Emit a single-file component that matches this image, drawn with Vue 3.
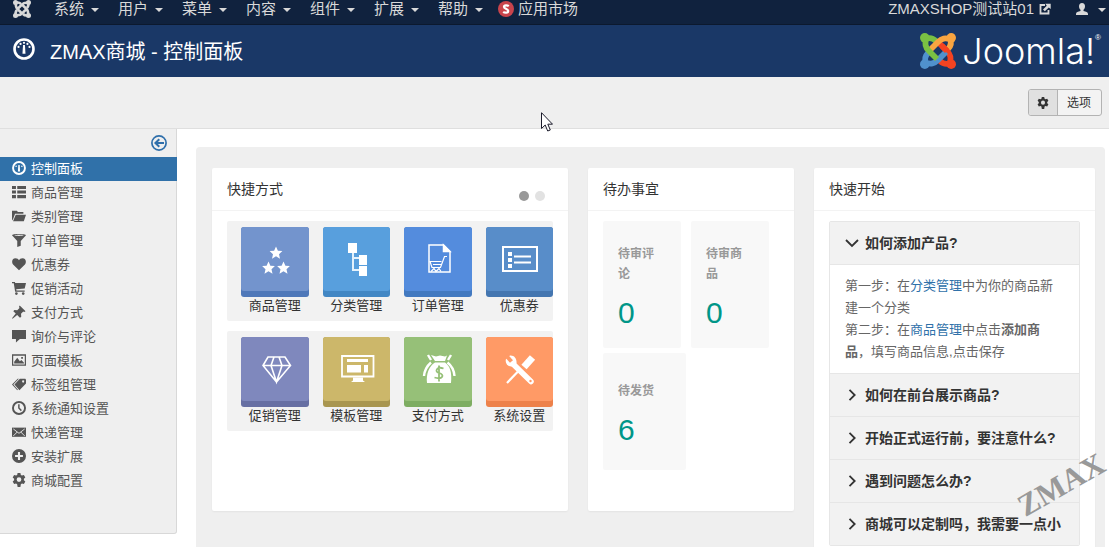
<script setup>
import { ref } from 'vue'

const menus = ['系统', '用户', '菜单', '内容', '组件', '扩展', '帮助']

const sidebar = [
  { label: '控制面板', icon: 'dash' },
  { label: '商品管理', icon: 'list' },
  { label: '类别管理', icon: 'folder' },
  { label: '订单管理', icon: 'filter' },
  { label: '优惠券', icon: 'heart' },
  { label: '促销活动', icon: 'cart' },
  { label: '支付方式', icon: 'pin' },
  { label: '询价与评论', icon: 'comment' },
  { label: '页面模板', icon: 'image' },
  { label: '标签组管理', icon: 'tag' },
  { label: '系统通知设置', icon: 'clock' },
  { label: '快递管理', icon: 'mail' },
  { label: '安装扩展', icon: 'plus' },
  { label: '商城配置', icon: 'gear' },
]

const shortcutRows = [
  [
    { label: '商品管理', icon: 'stars' },
    { label: '分类管理', icon: 'tree' },
    { label: '订单管理', icon: 'order' },
    { label: '优惠券', icon: 'coupon' },
  ],
  [
    { label: '促销管理', icon: 'diamond' },
    { label: '模板管理', icon: 'screen' },
    { label: '支付方式', icon: 'money' },
    { label: '系统设置', icon: 'tools' },
  ],
]

const todos = [
  { label: '待审评论', count: 0 },
  { label: '待审商品', count: 0 },
  { label: '待发货', count: 6 },
]

const questions = [
  '如何添加产品?',
  '如何在前台展示商品?',
  '开始正式运行前，要注意什么?',
  '遇到问题怎么办?',
  '商城可以定制吗，我需要一点小',
]
const open = ref(0)
const slide = ref(0)
const star = 'M0-6.5 1.9-2.2 6.4-1.9 3 1.2 4 5.7 0 3.3-4 5.7-3 1.2-6.4-1.9-1.9-2.2z'
const gear = 'M6.4 0h3.2l.5 2.2 1.3.7 2.2-.7 1.6 2.8-1.6 1.6v1.6l1.6 1.6-1.6 2.9-2.2-.7-1.3.8L9.600 16H6.400l-.5-3.200-1.300-.8-2.200.7L.8 9.800l1.600-1.600V6.600L.8 5l1.600-2.800 2.200.7 1.300-.7zM8 4.800a2.700 2.700 0 1 0 0 5.400 2.700 2.700 0 0 0 0-5.400z'
</script>

<template>
  <div class="page">
    <nav class="topbar">
      <a class="brand" href="#" aria-label="Joomla">
        <svg viewBox="0 0 36 36" width="18" height="18">
          <g fill="none" stroke="#d9d9d9" stroke-width="5">
            <path d="M6 6C5 11 5 14 9 18L17 26M30 6C25 5 22 5 18 9L10 17M30 30C31 25 31 22 27 18L19 10M6 30C11 31 14 31 18 27L26 19" />
            <path d="M5 6C10 4 13 5 16 8M30 5C32 10 31 13 28 16M31 30C26 32 23 31 20 28M6 31C4 26 5 23 8 20" />
          </g>
          <g fill="#d9d9d9"><circle cx="5" cy="5" r="5" /><circle cx="31" cy="5" r="5" /><circle cx="5" cy="31" r="5" /><circle cx="31" cy="31" r="5" /></g>
        </svg>
      </a>
      <ul class="menus">
        <li v-for="m in menus" :key="m"><a href="#">{{ m }}<i class="caret"></i></a></li>
      </ul>
      <a class="market" href="#">
        <svg viewBox="0 0 16 16" width="16" height="16">
          <circle cx="8" cy="8" r="8" fill="#c9444c" />
          <path d="M10.800 5.200C9.500 4.200 6 3.800 6 5.900 6 8 10.200 7.500 10.200 10 10.200 12.200 6.600 12 5.200 10.800" fill="none" stroke="#fff" stroke-width="2.200" />
        </svg>
        应用市场
      </a>
      <a class="site" href="#">
        ZMAXSHOP测试站01
        <svg viewBox="0 0 12 12" width="12" height="12">
          <path d="M6 2H1.500v8.500H9.500V7" fill="none" stroke="#d9d9d9" stroke-width="1.800" />
          <path d="M4 6.500 7.800 2.800 6.300.8H11.700V6L9.800 4.600 5.800 8.300z" fill="#d9d9d9" />
        </svg>
      </a>
      <a class="user" href="#" aria-label="用户">
        <svg viewBox="0 0 12 12" width="12" height="12">
          <path d="M6 0c2 0 3 1.300 3 3.200C9 5 8.200 6 7.500 6.800v1.200c2.500.5 4.500 1.200 4.500 3v1H0v-1c0-1.800 2-2.500 4.500-3V6.800C3.800 6 3 5 3 3.200 3 1.300 4 0 6 0z" fill="#d9d9d9" />
        </svg>
        <i class="caret"></i>
      </a>
    </nav>

    <header class="header">
      <svg class="head-icon" viewBox="0 0 16 16" width="22" height="22">
        <circle cx="8" cy="8" r="6.900" fill="none" stroke="#fff" stroke-width="1.900" />
        <path d="M7.300 5h1.400l.4 6.500H6.900z" fill="#fff" />
        <g fill="#fff"><circle cx="4" cy="6.500" r=".8" /><circle cx="5.500" cy="4.300" r=".8" /><circle cx="8" cy="3.500" r=".8" /><circle cx="10.500" cy="4.300" r=".8" /><circle cx="12" cy="6.500" r=".8" /></g>
      </svg>
      <h1>ZMAX商城 - 控制面板</h1>
      <div class="logo">
        <svg viewBox="0 0 36 36" width="36" height="36">
          <g fill="none" stroke-width="5.800">
            <path d="M5 6C10 4 13 5 16 8" stroke="#7ac143" />
            <path d="M30 5C32 10 31 13 28 16" stroke="#f9a541" />
            <path d="M31 30C26 32 23 31 20 28" stroke="#f44321" />
            <path d="M6 31C4 26 5 23 8 20" stroke="#5091cd" />
            <path d="M30 30C31 25 31 22 27 18L19 10" stroke="#f44321" />
            <path d="M6 30C11 31 14 31 18 27L26 19" stroke="#5091cd" />
            <path d="M30 6C25 5 22 5 18 9L10 17" stroke="#f9a541" />
            <path d="M6 6C5 11 5 14 9 18L17 26" stroke="#7ac143" />
            <path d="M27 18 22 13" stroke="#f44321" />
          </g>
          <circle cx="4.800" cy="4.800" r="4.800" fill="#7ac143" />
          <circle cx="31.200" cy="4.800" r="4.800" fill="#f9a541" />
          <circle cx="31.200" cy="31.200" r="4.800" fill="#f44321" />
          <circle cx="4.800" cy="31.200" r="4.800" fill="#5091cd" />
        </svg>
        <span class="wordmark">Joomla!</span><sup>®</sup>
      </div>
    </header>

    <div class="subhead">
      <button class="options" type="button">
        <span class="options-icon"><svg viewBox="0 0 16 16" width="12" height="12"><path :d="gear" fill="#333" fill-rule="evenodd" /></svg></span>
        <span class="options-text">选项</span>
      </button>
    </div>

    <div class="body">
      <aside class="sidebar">
        <button class="toggle" type="button" aria-label="收起">
          <svg viewBox="0 0 16 16" width="16" height="16" fill="none" stroke="#2f6fab">
            <circle cx="8" cy="8" r="7.100" stroke-width="1.700" />
            <path d="M13 8H5M8.300 4.200 4.400 8l3.900 3.800" stroke-width="2" />
          </svg>
        </button>
        <ul>
          <li v-for="(s, i) in sidebar" :key="s.label">
            <a href="#" :class="{ active: i === 0 }">
              <svg viewBox="0 0 16 16" width="14" height="14" fill="currentColor">
                <template v-if="s.icon === 'dash'">
                  <circle cx="8" cy="8" r="6.800" fill="none" stroke="currentColor" stroke-width="2.200" />
                  <path d="M7.200 4.500h1.600l.4 7.500H6.800z" /><circle cx="4.700" cy="6" r=".9" /><circle cx="11.300" cy="6" r=".9" />
                </template>
                <path v-else-if="s.icon === 'list'" d="M0 1h4.500v3.600H0zM6 1h10v3.600H6zM0 6.200h4.500v3.600H0zM6 6.200h10v3.600H6zM0 11.400h4.500V15H0zM6 11.400h10V15H6z" />
                <path v-else-if="s.icon === 'folder'" d="M0 2h5.500l1.300 1.500H13V5.500H3.500L1.300 11.500 0 13zM4.300 6.500H16L13.500 14H1.200z" />
                <path v-else-if="s.icon === 'filter'" fill-rule="evenodd" d="M0 2.500C0 .5 16 .5 16 2.500L10 9v5.500L6 16V9zM2.500 2.700c2 1 9 1 11 0-2-.8-9-.8-11 0z" />
                <path v-else-if="s.icon === 'heart'" d="M8 15 1.200 8.500C-.8 6 0 1.500 4 1.500c2 0 3.300 1 4 2.300.700-1.300 2-2.300 4-2.300 4 0 4.800 4.500 2.800 7z" />
                <g v-else-if="s.icon === 'cart'">
                  <path d="M0 1h3.500v1.200H16L14.500 8.500 4.800 9.300l.3 1.500H14.500v1.500H3.600L2 2.700H0z" /><circle cx="5" cy="14.400" r="1.500" /><circle cx="12.800" cy="14.400" r="1.500" />
                </g>
                <path v-else-if="s.icon === 'pin'" d="M8.800.5 15.500 7l-1.600.9-1-.5-2.600 2.700.3 3.200-1.500 1.300-3.200-3.300L1 15.500 0 15.500 0 15 4.300 9.800 1.500 7 2.700 5.700l3.300.2L8.600 3.300 8 2z" />
                <path v-else-if="s.icon === 'comment'" d="M0 1h16v10.500H9L4.500 15.500v-4H0z" />
                <path v-else-if="s.icon === 'image'" fill-rule="evenodd" d="M0 1.500h16v13H0zM1.400 3v10h13.200V3zM2.500 12V10l3.500-4.500 3 4 1.700-1.500 3 3.200V12zM10.500 4.500h2v2.200h-2z" />
                <path v-else-if="s.icon === 'tag'" fill-rule="evenodd" d="M9 2h6.200l.8 1v4.500L8.500 15 2.800 8.500zM12.700 3.800a1.200 1.200 0 1 0 .1 0zM6.500 2h1.300L1.500 8.500l5.300 6L6 15 0 8.500z" />
                <path v-else-if="s.icon === 'clock'" d="M8 0a8 8 0 1 1 0 16A8 8 0 0 1 8 0zm0 2.200a5.800 5.800 0 1 0 0 11.600A5.800 5.800 0 0 0 8 2.200zM7 3.600h1.700v4l2.600 2.800-1.200 1.200L7 8.300z" />
                <g v-else-if="s.icon === 'mail'">
                  <path d="M0 3h16v10.500H0z" /><path d="M1.500 4.500 8 9.500l6.500-5M1.500 12.500 6 8M14.500 12.500 10 8" fill="none" stroke="#efefef" />
                </g>
                <path v-else-if="s.icon === 'plus'" fill-rule="evenodd" d="M8 0a8 8 0 1 1 0 16A8 8 0 0 1 8 0zM6.800 3.500v3.300H3.500v2.400h3.300v3.300h2.400V9.200h3.300V6.800H9.200V3.500z" />
                <path v-else :d="gear" fill-rule="evenodd" />
              </svg>
              <span>{{ s.label }}</span>
            </a>
          </li>
        </ul>
      </aside>

      <main class="content">
        <div class="board">
          <section class="panel short">
            <header class="panel-head">
              <h2>快捷方式</h2>
              <div class="dots">
                <button v-for="n in 2" :key="n" type="button" :class="{ on: slide === n - 1 }" :aria-label="'第' + n + '页'" @click="slide = n - 1"></button>
              </div>
            </header>
            <div class="panel-body rows">
              <div v-for="(row, r) in shortcutRows" :key="r" class="row">
                <a v-for="t in row" :key="t.label" class="tile" href="#">
                  <span class="tile-base" :class="t.icon">
                    <span class="tile-face">
                      <svg viewBox="0 0 68 64" width="68" height="64" fill="none" stroke="#fff">
                        <g v-if="t.icon === 'stars'" fill="#fff" stroke="none">
                          <path :d="star" transform="translate(35 26)" /><path :d="star" transform="translate(27.500 41)" /><path :d="star" transform="translate(42.500 41)" />
                        </g>
                        <g v-else-if="t.icon === 'tree'">
                          <path d="M31 24V43H38M31 31H38" stroke-width="2" stroke="#e4f1fb" />
                          <path d="M26 16h9v10h-9zM37 28h8v10h-8zM37 39h8v10h-8z" fill="#fff" stroke="none" />
                        </g>
                        <g v-else-if="t.icon === 'order'" stroke-width="1.500">
                          <path d="M25 18H39.500L46 24.500V45H25z" /><path d="M39.500 18v6.500H46z" fill="#fff" />
                          <path d="M43 29.500H40.500L36.500 40.500H28L26 34.500H37.500M29 37.500H37" stroke-width="1.200" />
                          <path d="M27 44.500 30 41.500 32 44.500 35 41.500 37 44.500" stroke-width="1.200" />
                        </g>
                        <g v-else-if="t.icon === 'coupon'">
                          <path d="M18 20H52V44H18z" stroke-width="2" />
                          <path d="M23 25h4v4h-4zM23 31h4v4h-4zM23 37h4v4h-4z" fill="#fff" stroke="none" />
                          <path d="M29 29.500H46M29 35.500H46" stroke-width="2" />
                        </g>
                        <g v-else-if="t.icon === 'diamond'" stroke-width="1.600">
                          <path d="M27 20H44L49.500 28.500 35.500 45 22 28.500zM22 28.500H49.500M33 20 30 28.500 35.500 45 41 28.500 38 20" />
                        </g>
                        <g v-else-if="t.icon === 'screen'">
                          <path d="M20 19H51.500V39.500H20z" stroke-width="1.800" />
                          <path d="M25 22H46v3H25zM25 28H39v7.500H25zM42 28H46v7.500H42zM31 40.500H41V43.500L43 45H29L31 43.500z" fill="#fff" stroke="none" />
                        </g>
                        <g v-else-if="t.icon === 'money'">
                          <path d="M27 18 32 19.500 36 18.500 41 19.500 43 18.500 41 24 31 24zM31 25.500H41C46 29 48 35 47 46H23C22 37 25 29 31 25.500z" fill="#fff" stroke="none" />
                          <path d="M24 18l3 5M47 18l-3 5M27 25.500C23 29 20.500 33 20 39M43.500 25.500C48 29 50 33 50.500 39" stroke-width="2.400" />
                          <path d="M39.500 31.500C33 29 30 34.500 35 36 41 37.500 39 43 30.500 40.500M35 28.500V44.500" stroke="#96c078" stroke-width="1.800" />
                        </g>
                        <g v-else>
                          <path d="M24.500 23.500 46 44.500" stroke-width="5.500" stroke-linecap="round" />
                          <path d="M21 22l4-3.500c4-.5 7 3 6.500 8l-4 3c-4 .5-8-3-6.500-7.500z" fill="#fff" stroke="none" />
                          <path d="M21 18.500 26.500 24.500" stroke="#ff9a66" stroke-width="4" />
                          <path d="M22 46 33 34.500" stroke-width="2.200" /><path d="M39 30 47.500 20.500" stroke-width="7" />
                          <circle cx="45.500" cy="44" r="1.200" fill="#ff9a66" stroke="none" />
                        </g>
                      </svg>
                    </span>
                  </span>
                  <span class="tile-label">{{ t.label }}</span>
                </a>
              </div>
            </div>
          </section>

          <section class="panel short">
            <header class="panel-head"><h2>待办事宜</h2></header>
            <div class="panel-body todos">
              <a v-for="t in todos" :key="t.label" class="todo" href="#">
                <h3>{{ t.label }}</h3>
                <strong>{{ t.count }}</strong>
              </a>
            </div>
          </section>

          <section class="panel">
            <header class="panel-head"><h2>快速开始</h2></header>
            <div class="panel-body">
              <div class="accordion">
                <div v-for="(q, i) in questions" :key="q" class="item">
                  <button type="button" :aria-expanded="open === i" @click="open = open === i ? -1 : i">
                    <svg viewBox="0 0 14 14" width="14" height="14" fill="none" stroke="#333" stroke-width="1.800">
                      <path v-if="open === i" d="M1 4l6 6 6-6" /><path v-else d="M4.500 1.800 9.700 7l-5.200 5.200" />
                    </svg>
                    <span>{{ q }}</span>
                  </button>
                  <div v-if="i === 0 && open === 0" class="answer">
                    <p>第一步：在<a href="#">分类管理</a>中为你的商品新建一个分类</p>
                    <p>第二步：在<a href="#">商品管理</a>中点击<b>添加商品</b>，填写商品信息,点击保存</p>
                  </div>
                </div>
              </div>
            </div>
          </section>
        </div>
      </main>
    </div>

    <div class="watermark">ZMAX</div>
    <svg class="pointer" viewBox="0 0 12 20" width="12" height="20">
      <path d="M.5.700V16.500L4.200 13 6.700 19 9.300 18 6.800 12.200H11.500z" fill="#fff" stroke="#1c1c2c" />
    </svg>
  </div>
</template>

<style>
html,
body {
  margin: 0;
  overflow: hidden;
}
</style>

<style scoped>
.page {
  position: relative;
  display: flex;
  flex-direction: column;
  min-height: 100vh;
  background: #fff;
  color: #333;
  font-family: "Liberation Sans", "Noto Sans CJK SC", sans-serif;
  font-size: 13px;
}
.page * {
  box-sizing: border-box;
}
ul,
h1,
h2,
h3,
p {
  margin: 0;
  padding: 0;
  list-style: none;
  font-weight: normal;
}
a {
  color: inherit;
  text-decoration: none;
}
svg {
  flex: none;
  display: block;
}
button {
  font-family: inherit;
  cursor: pointer;
}
.topbar {
  display: flex;
  align-items: center;
  height: 25px;
  padding: 0 4px 7px 13px;
  border-bottom: 1px solid #0c192e;
  background: #10223e;
  color: #d9d9d9;
  font-size: 15px;
  line-height: 17px;
}
.brand {
  margin-right: 23px;
}
.menus {
  display: flex;
  gap: 20px;
}
.menus a,
.market,
.site,
.user {
  display: flex;
  align-items: center;
}
.caret {
  width: 0;
  margin: 2px -1px 0 7px;
  border: solid transparent;
  border-width: 4px 4px 0;
  border-top-color: #d9d9d9;
}
.market {
  gap: 4px;
  margin-left: 16px;
}
.site {
  gap: 5px;
  margin-left: auto;
}
.user {
  margin-left: 25px;
}
.user .caret {
  margin-left: 10px;
}
.header {
  display: flex;
  align-items: center;
  height: 52px;
  padding: 0 8px 0 13px;
  background: #1a3867;
  color: #fff;
}
.head-icon {
  margin-right: 15px;
  margin-bottom: 4px;
}
h1 {
  padding-bottom: 2px;
  font-size: 20px;
}
.logo {
  display: flex;
  align-items: center;
  gap: 6px;
  margin-left: auto;
}
.wordmark {
  font-family: Inter, sans-serif;
  font-weight: 300;
  font-size: 36px;
  line-height: 36px;
}
.logo sup {
  align-self: flex-start;
  margin-left: -6px;
  font-size: 8px;
}
.subhead {
  display: flex;
  justify-content: flex-end;
  align-items: center;
  height: 52px;
  padding: 0 7px;
  border-bottom: 1px solid #dfdfdf;
  background: #efefef;
}
.options {
  display: flex;
  height: 27px;
  padding: 0;
  border: 1px solid #b3b3b3;
  border-radius: 3px;
  background: #f3f3f3;
  color: #333;
  font-size: 12px;
  overflow: hidden;
}
.options-icon {
  display: flex;
  align-items: center;
  height: 100%;
  padding: 0 8px;
  border-right: 1px solid #b3b3b3;
  background: #e0e0e0;
}
.options-text {
  align-self: center;
  padding: 0 10px 2px 9px;
}
.body {
  display: flex;
  flex: 1;
}
.sidebar {
  flex: none;
  align-self: flex-start;
  width: 177px;
  padding-bottom: 40px;
  border-bottom: 1px solid #d8d8d8;
  border-radius: 0 0 3px 0;
  background: #efefef;
  box-shadow: inset -1px 0 #d8d8d8;
}
.toggle {
  display: flex;
  align-items: center;
  height: 28px;
  margin-left: auto;
  padding: 0 10px;
  border: 0;
  background: none;
}
.sidebar a {
  display: flex;
  align-items: center;
  gap: 5px;
  height: 24px;
  padding: 0 12px 2px;
  color: #555;
}
.sidebar a span {
  padding-bottom: 2px;
}
.sidebar a.active {
  background: #3071a9;
  color: #fff;
}
.content {
  display: flex;
  flex: 1;
  min-width: 0;
  padding: 18px 4px 0 19px;
}
.board {
  display: grid;
  grid-template-columns: 356fr 206fr 281fr;
  align-items: start;
  gap: 20px;
  flex: 1;
  min-width: 0;
  padding: 21px 10px 0 16px;
  border-radius: 4px 4px 0 0;
  background: #efefef;
}
.panel {
  min-width: 0;
  border-radius: 2px;
  background: #fff;
  box-shadow: 0 1px 2px rgba(0, 0, 0, 0.05);
}
.short {
  min-height: 343px;
}
.panel-head {
  display: flex;
  align-items: center;
  height: 43px;
  padding: 0 15px;
  border-bottom: 1px solid #f3f3f3;
}
h2 {
  padding-bottom: 2px;
  font-size: 14px;
}
.panel-body {
  padding: 10px 15px;
}
.dots {
  display: flex;
  gap: 6px;
  align-self: flex-end;
  margin-left: auto;
  padding: 0 8px 9px 0;
}
.dots button {
  width: 10px;
  height: 10px;
  padding: 0;
  border: 0;
  border-radius: 50%;
  background: #e2e2e2;
}
.dots .on {
  background: #999;
}
.rows {
  display: flex;
  flex-direction: column;
  gap: 10px;
}
.row {
  display: grid;
  grid-template-columns: repeat(4, minmax(0, 1fr));
  padding: 6px 0;
  border-radius: 2px;
  background: #f2f2f2;
}
.tile {
  padding-left: 14px;
}
.tile-base {
  display: block;
  height: 70px;
  border-radius: 3px;
  overflow: hidden;
}
.tile-face {
  display: flex;
  justify-content: center;
  height: 64px;
  border-radius: 0 0 3px 3px;
}
.tile-label {
  display: block;
  height: 18px;
  line-height: 18px;
  text-align: center;
}
.stars { background: #4f78b9; }
.stars .tile-face { background: #7394cd; }
.tree { background: #4287c4; }
.tree .tile-face { background: #589fdd; }
.order { background: #4279c0; }
.order .tile-face { background: #548cdd; }
.coupon { background: #4476b0; }
.coupon .tile-face { background: #588dc9; }
.diamond { background: #676fa3; }
.diamond .tile-face { background: #7f88bd; }
.screen { background: #a99650; }
.screen .tile-face { background: #ccb76a; }
.money { background: #7ead62; }
.money .tile-face { background: #96c078; }
.tools { background: #ed814a; }
.tools .tile-face { background: #ff9a66; }
.todos {
  display: grid;
  grid-template-columns: 1fr 1fr;
  row-gap: 5px;
}
.todo {
  display: flex;
  flex-direction: column;
  justify-content: center;
  gap: 15px;
  min-height: 127px;
  margin-right: 10px;
  padding: 2px 20px 0 15px;
  border-radius: 2px;
  background: #f8f8f8;
  color: #999;
}
.todo:last-child {
  min-height: 117px;
  margin-right: 5px;
}
h3 {
  font-size: 12px;
  font-weight: bold;
  line-height: 20px;
}
.todo strong {
  color: #009688;
  font-size: 30px;
  font-weight: normal;
  line-height: 28px;
}
.accordion {
  border: 1px solid #e6e6e6;
  border-radius: 2px;
}
.item + .item {
  border-top: 1px solid #e6e6e6;
}
.item button {
  display: flex;
  align-items: center;
  gap: 6px;
  width: 100%;
  height: 42px;
  padding: 0 15px;
  border: 0;
  background: #f2f2f2;
  color: #333;
  font-size: 14px;
  font-weight: bold;
  white-space: nowrap;
  overflow: hidden;
}
.item button span {
  padding-bottom: 2px;
}
.answer {
  padding: 10px 15px;
  border-top: 1px solid #e6e6e6;
  color: #666;
  line-height: 22px;
}
.answer a {
  color: #3071a9;
}
.watermark {
  position: absolute;
  top: 468px;
  right: 0;
  color: #999;
  font-family: "Liberation Serif", serif;
  font-weight: bold;
  font-size: 31px;
  line-height: 34px;
  transform: rotate(-30deg);
}
.pointer {
  position: absolute;
  top: 112px;
  left: 541px;
}
</style>
